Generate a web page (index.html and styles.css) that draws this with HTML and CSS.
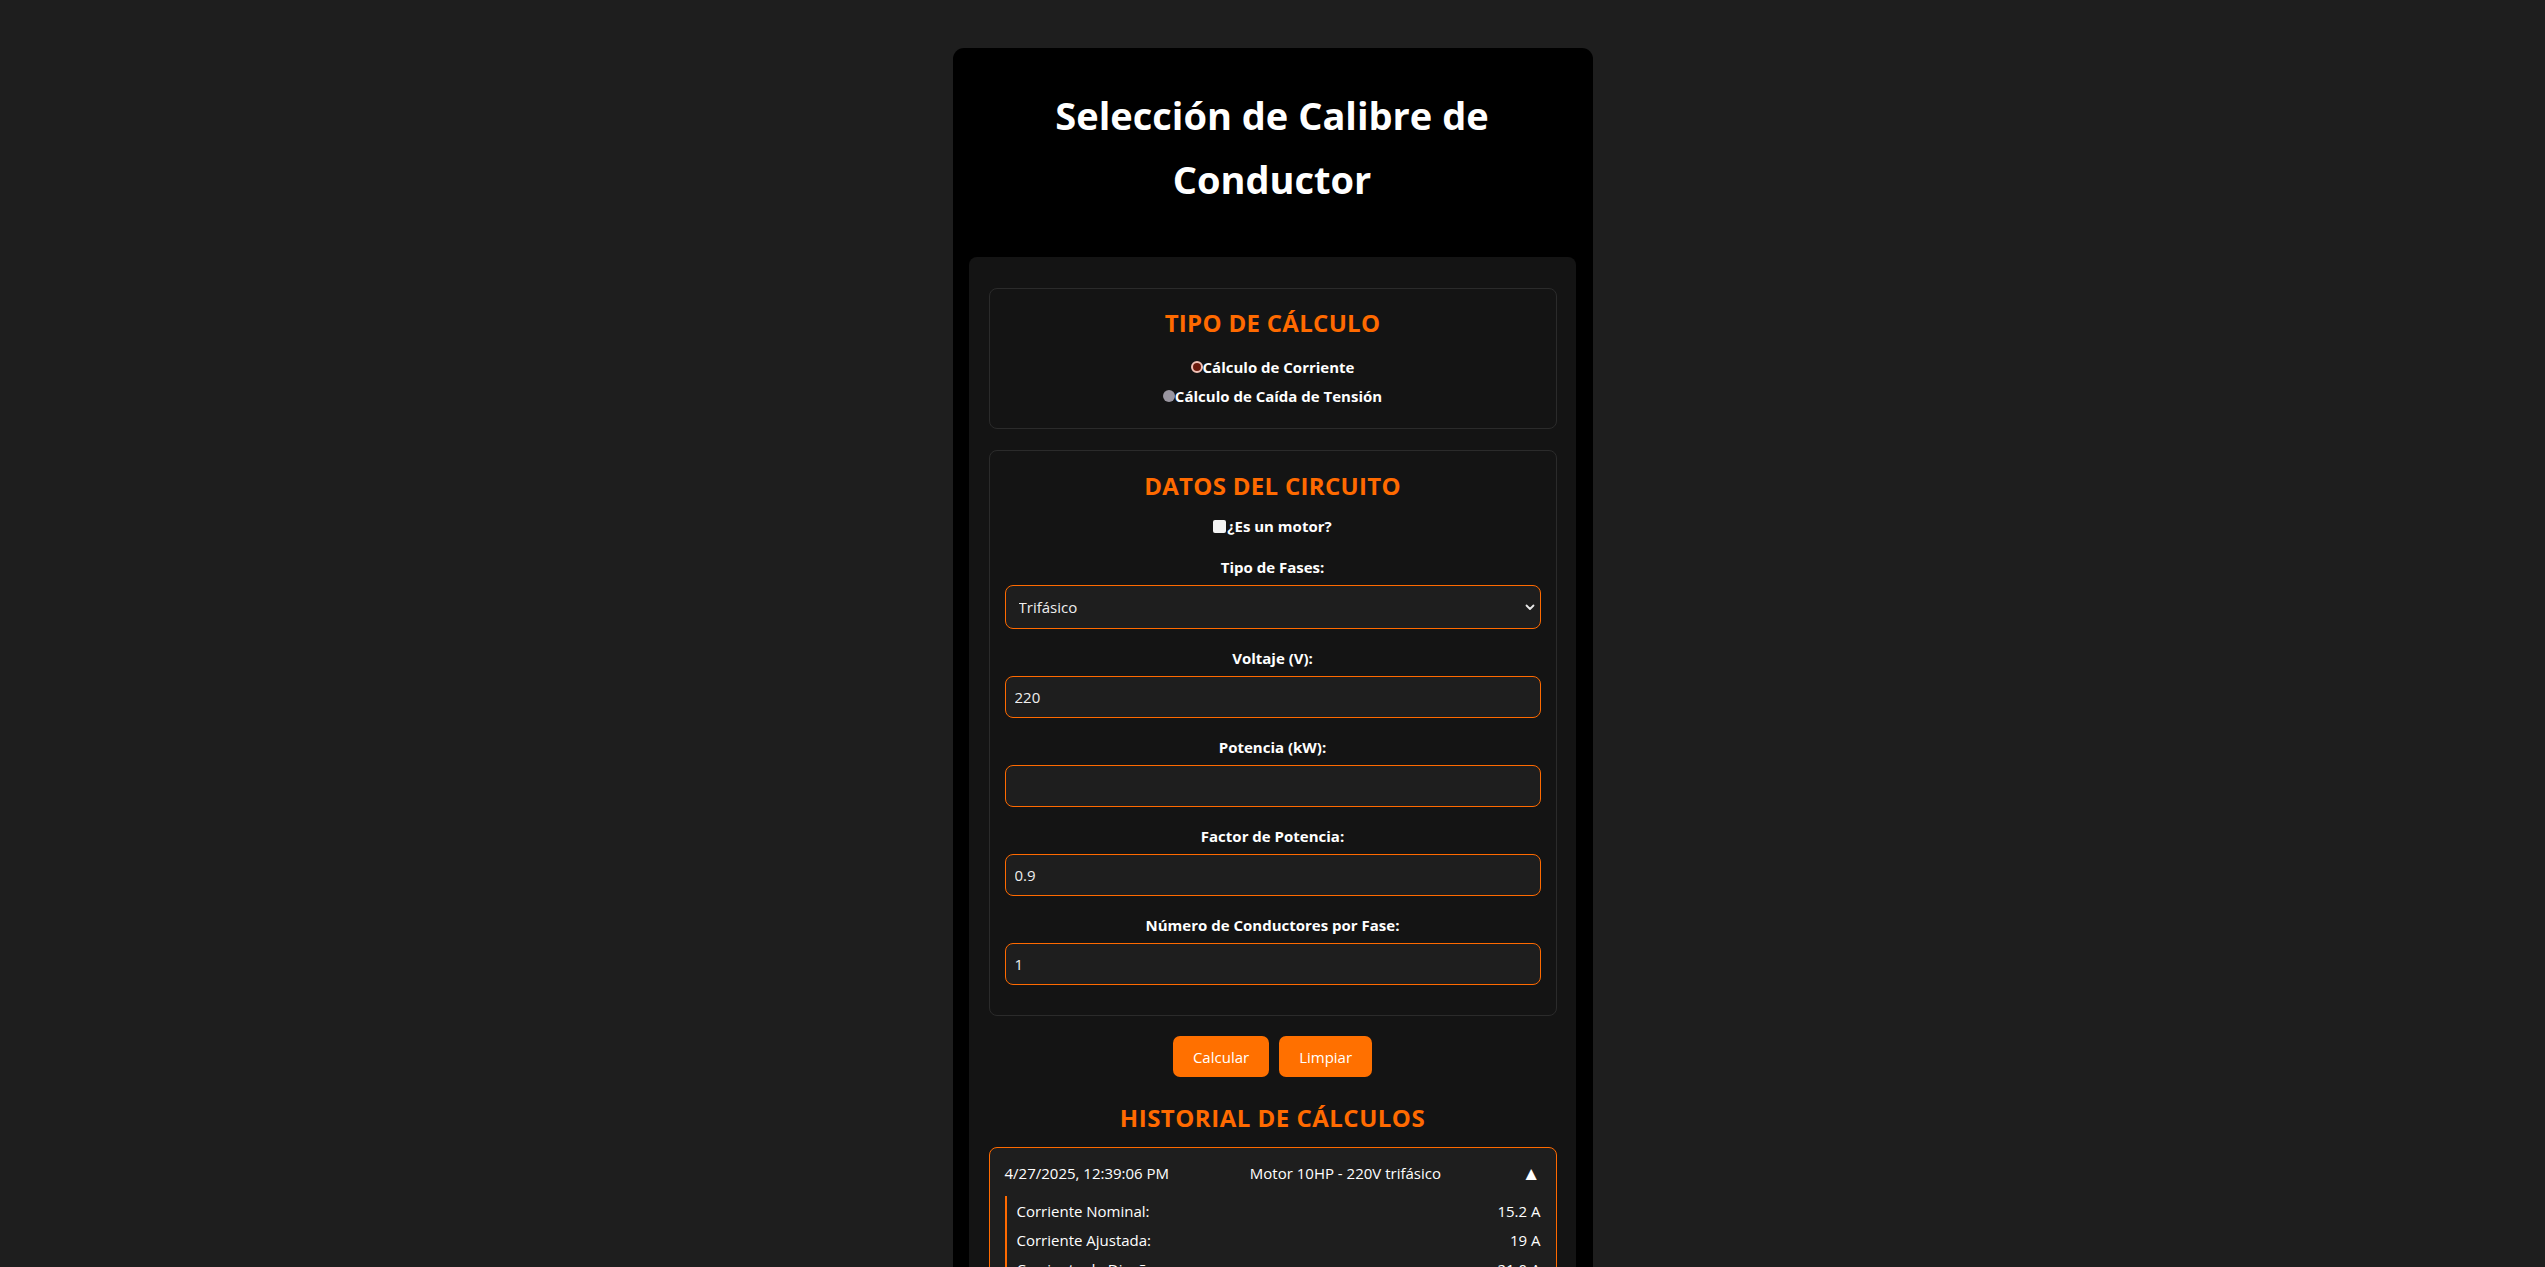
FILE: index.html
```html
<!DOCTYPE html>
<html lang="es">
<head>
<meta charset="utf-8">
<title>Selección de Calibre de Conductor</title>
<link rel="stylesheet" href="styles.css">
</head>
<body>
<div class="page">
  <main class="card">
    <h1 class="title">Selección de Calibre de Conductor</h1>
    <div class="panel">
      <section class="box box-tipo">
        <h2 class="box-heading">TIPO DE CÁLCULO</h2>
        <label class="radio-row"><input type="radio" name="tipo" class="radio radio-a">Cálculo de Corriente</label>
        <label class="radio-row"><input type="radio" name="tipo" class="radio radio-b">Cálculo de Caída de Tensión</label>
      </section>

      <section class="box box-datos">
        <h2 class="box-heading">DATOS DEL CIRCUITO</h2>
        <label class="check-row"><input type="checkbox" class="check">¿Es un motor?</label>

        <div class="group group-first">
          <label class="field-label">Tipo de Fases:</label>
          <div class="select-wrap">
            <select class="field field-select">
              <option>Trifásico</option>
              <option>Monofásico</option>
            </select>
            <svg class="chev" width="10" height="8" viewBox="0 0 10 8"><path d="M1.5 2.5 L5 6 L8.5 2.5" fill="none" stroke="#e8e8e8" stroke-width="1.8" stroke-linecap="round" stroke-linejoin="round"/></svg>
          </div>
        </div>

        <div class="group">
          <label class="field-label">Voltaje (V):</label>
          <input class="field" type="text" value="220">
        </div>

        <div class="group">
          <label class="field-label">Potencia (kW):</label>
          <input class="field" type="text" value="">
        </div>

        <div class="group">
          <label class="field-label">Factor de Potencia:</label>
          <input class="field" type="text" value="0.9">
        </div>

        <div class="group group-last">
          <label class="field-label">Número de Conductores por Fase:</label>
          <input class="field" type="text" value="1">
        </div>
      </section>

      <div class="actions">
        <button class="btn">Calcular</button>
        <button class="btn">Limpiar</button>
      </div>

      <h2 class="hist-heading">HISTORIAL DE CÁLCULOS</h2>

      <div class="hist-card">
        <div class="hist-head">
          <span class="hist-date">4/27/2025, 12:39:06 PM</span>
          <span class="hist-desc">Motor 10HP - 220V trifásico</span>
          <span class="hist-toggle">▲</span>
        </div>
        <div class="hist-details">
          <div class="hist-row"><span>Corriente Nominal:</span><span>15.2 A</span></div>
          <div class="hist-row"><span>Corriente Ajustada:</span><span>19 A</span></div>
          <div class="hist-row"><span>Corriente de Diseño:</span><span>21.0 A</span></div>
          <div class="hist-row"><span>Calibre Seleccionado:</span><span>10 AWG</span></div>
        </div>
      </div>
    </div>
  </main>
</div>
</body>
</html>
```

FILE: styles.css
```css
* { box-sizing: border-box; }

html, body {
  margin: 0;
  padding: 0;
  background: #1e1e1e;
  height: 100%;
  overflow: hidden;
}

body {
  font-family: "Open Sans", "Noto Sans", "Liberation Sans", sans-serif;
  color: #ffffff;
}

.page {
  display: flex;
  justify-content: center;
  padding-top: 48px;
}

.card {
  width: 640px;
  background: #000000;
  border-radius: 11px 11px 0 0;
  padding: 0 17px 40px 16px;
}

.title {
  margin: 35px 0 46px;
  font-size: 38px;
  line-height: 64px;
  font-weight: 700;
  text-align: center;
  color: #ffffff;
  padding: 0 30px;
  letter-spacing: 0;
}

.panel {
  background: #141414;
  border-radius: 8px;
  padding: 31px 19px 20px 20px;
}

.box {
  border: 1px solid #2b2b2b;
  border-radius: 8px;
  padding: 0 15px;
  display: flex;
  flex-direction: column;
  align-items: stretch;
}

.box-tipo {
  padding-top: 18px;
  padding-bottom: 22px;
  margin-bottom: 21px;
}

.box-datos {
  padding-top: 19px;
  padding-bottom: 30px;
}

.box-heading, .hist-heading {
  margin: 0;
  color: #ff6a00;
  font-size: 24px;
  line-height: 32px;
  font-weight: 700;
  text-align: center;
  letter-spacing: 0.3px;
}

.radio-row {
  display: flex;
  justify-content: center;
  align-items: center;
  font-size: 15px;
  font-weight: 700;
  line-height: 20px;
  margin-top: 9px;
}

.box-tipo .box-heading + .radio-row { margin-top: 18px; }

.radio {
  appearance: none;
  -webkit-appearance: none;
  width: 12px;
  height: 12px;
  margin: 0;
  border-radius: 50%;
  flex: none;
}

.radio-a {
  background: #6a1a0c;
  border: 2px solid #f2c2b6;
}

.radio-b {
  background: #9a96a0;
}

.check-row {
  display: flex;
  justify-content: center;
  align-items: center;
  font-size: 15px;
  font-weight: 700;
  line-height: 20px;
  margin-top: 14px;
}

.check {
  appearance: none;
  -webkit-appearance: none;
  width: 13px;
  height: 13px;
  margin: 0 1px 0 0;
  background: #f4f4f4;
  border-radius: 2px;
  flex: none;
}

.group {
  display: flex;
  flex-direction: column;
  margin-top: 19px;
}

.group-first { margin-top: 21px; }

.field-label {
  display: block;
  text-align: center;
  font-size: 15px;
  font-weight: 700;
  line-height: 20px;
  margin-bottom: 8px;
}

.field {
  width: 100%;
  height: 42px;
  background: #1e1e1e;
  border: 1px solid #ff6a00;
  border-radius: 8px;
  color: #eeeeee;
  font-family: inherit;
  font-size: 15px;
  padding: 0 9px;
  outline: none;
}

.select-wrap {
  position: relative;
}

.field-select {
  appearance: none;
  -webkit-appearance: none;
  height: 44px;
  padding: 0 13px;
}

.chev {
  position: absolute;
  right: 6px;
  top: 18px;
  pointer-events: none;
}

.actions {
  display: flex;
  justify-content: center;
  gap: 10px;
  margin-top: 20px;
}

.btn {
  height: 41px;
  padding: 0 20px;
  background: #ff7000;
  color: #ffffff;
  border: none;
  border-radius: 7px;
  font-family: inherit;
  font-size: 15px;
}

.hist-heading {
  margin-top: 25px;
  margin-bottom: 13px;
  letter-spacing: 0.5px;
}

.hist-card {
  border: 1px solid #ff6a00;
  border-radius: 8px;
  background: #1e1e1e;
  padding: 14px 15px 15px;
}

.hist-head {
  display: flex;
  justify-content: space-between;
  align-items: center;
  font-size: 15px;
  line-height: 22px;
}

.hist-toggle {
  font-size: 19px;
  line-height: 22px;
}

.hist-details {
  margin-top: 12px;
  border-left: 2px solid #ff6a00;
  padding-left: 10px;
}

.hist-row {
  display: flex;
  justify-content: space-between;
  font-size: 15px;
  line-height: 22px;
  padding: 4px 0 3px;
}
```
